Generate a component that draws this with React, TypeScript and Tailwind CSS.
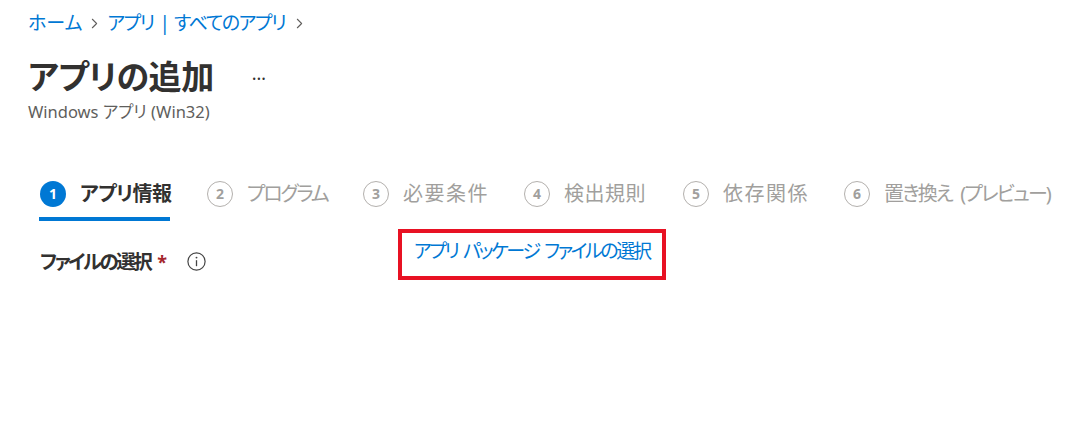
import { ChevronRight } from "lucide-react"

const steps = [
    { n: 1, label: "アプリ情報", cls: "w-[90px] tracking-[-0.6px]" },
    { n: 2, label: "プログラム", cls: "w-[79px] tracking-[-2.2px]" },
    { n: 3, label: "必要条件", cls: "w-[84px] tracking-[1.5px]" },
    { n: 4, label: "検出規則", cls: "w-[82px] tracking-[0.5px]" },
    { n: 5, label: "依存関係", cls: "w-[84px] tracking-[1.5px]" },
    { n: 6, label: "置き換え (プレビュー)", cls: "w-[163px] tracking-[-1.9px] [word-spacing:5px]" },
]

function InfoIcon() {
    return (
        <svg width="19" height="19" viewBox="0 0 19 19" fill="none">
            <circle cx="9.5" cy="9.5" r="8.6" stroke="#444" strokeWidth="1.2" />
            <circle cx="9.5" cy="5.6" r="0.95" fill="#444" />
            <path d="M9.5 8.2v6" stroke="#444" strokeWidth="1.3" />
        </svg>
    )
}

export default function App() {
    return (
        <div
            className="w-[1078px] h-[448px] bg-white text-[#323130] overflow-hidden whitespace-nowrap [font-feature-settings:'palt']"
            style={{ fontFamily: '"Noto Sans", "Noto Sans CJK JP", sans-serif' }}
        >
            <div className="pl-[28px] pt-[10px]">
                {/* breadcrumb */}
                <div className="flex items-center h-[26px] text-[19px] leading-none">
                    <span className="text-[#0078d4]">ホーム</span>
                    <ChevronRight className="mx-[4px] w-[17px] h-[17px] text-[#605e5c]" strokeWidth={1.5} />
                    <span className="text-[#0078d4] tracking-[-1.4px] [word-spacing:2px]">アプリ | すべてのアプリ</span>
                    <ChevronRight className="mx-[6px] w-[17px] h-[17px] text-[#605e5c]" strokeWidth={1.5} />
                </div>

                {/* title */}
                <div className="flex items-center mt-[20px] h-[40px]">
                    <h1 className="text-[33px] font-bold leading-none tracking-[-0.4px]">アプリの追加</h1>
                    <span className="ml-[38px] text-[18px] leading-none -mt-[6px]">…</span>
                </div>
                <div className="mt-[8px] text-[16.5px] leading-none text-[#605e5c]">Windows アプリ (Win32)</div>
            </div>

            {/* steps */}
            <div className="flex pl-[40px] mt-[60px]">
                {steps.map((s, i) => {
                    const active = i === 0
                    return (
                        <div key={s.n} className={i > 0 ? "ml-[37px]" : ""}>
                            <div className="flex items-center h-[26px]">
                                <span
                                    className={
                                        active
                                            ? "w-[26px] h-[26px] rounded-full bg-[#0078d4] text-white text-[14px] font-bold flex items-center justify-center"
                                            : "w-[26px] h-[26px] rounded-full border-[1.5px] border-[#b3b0ad] text-[#a19f9d] text-[14px] font-bold flex items-center justify-center"
                                    }
                                >
                                    {s.n}
                                </span>
                                <span
                                    className={
                                        (active
                                            ? "ml-[14px] text-[20px] font-bold leading-none text-[#323130] "
                                            : "ml-[14px] text-[20px] leading-none text-[#a19f9d] ") + s.cls
                                    }
                                >
                                    {s.label}
                                </span>
                            </div>
                            {active ? (
                                <div className="mt-[10px] h-[4px] -ml-[1px] bg-[#0078d4]" />
                            ) : null}
                        </div>
                    )
                })}
            </div>

            {/* form row */}
            <div className="flex items-start pl-[40px] mt-[8px]">
                <div className="flex items-center w-[358px] mt-[22px] h-[22px]">
                    <span className="text-[19.5px] font-bold leading-none tracking-[-2.5px]">ファイルの選択</span>
                    <span className="ml-[7px] text-[18px] font-bold text-[#a4262c] leading-none">*</span>
                    <span className="ml-[20px] flex"><InfoIcon /></span>
                </div>
                <div className="border-[4px] border-[#e81123] w-[268px] h-[51px] flex items-center pl-[12px]">
                    <span className="text-[19px] leading-none text-[#0078d4] tracking-[-2.4px] [word-spacing:3px] -mt-[5px]">アプリ パッケージ ファイルの選択</span>
                </div>
            </div>
        </div>
    )
}
